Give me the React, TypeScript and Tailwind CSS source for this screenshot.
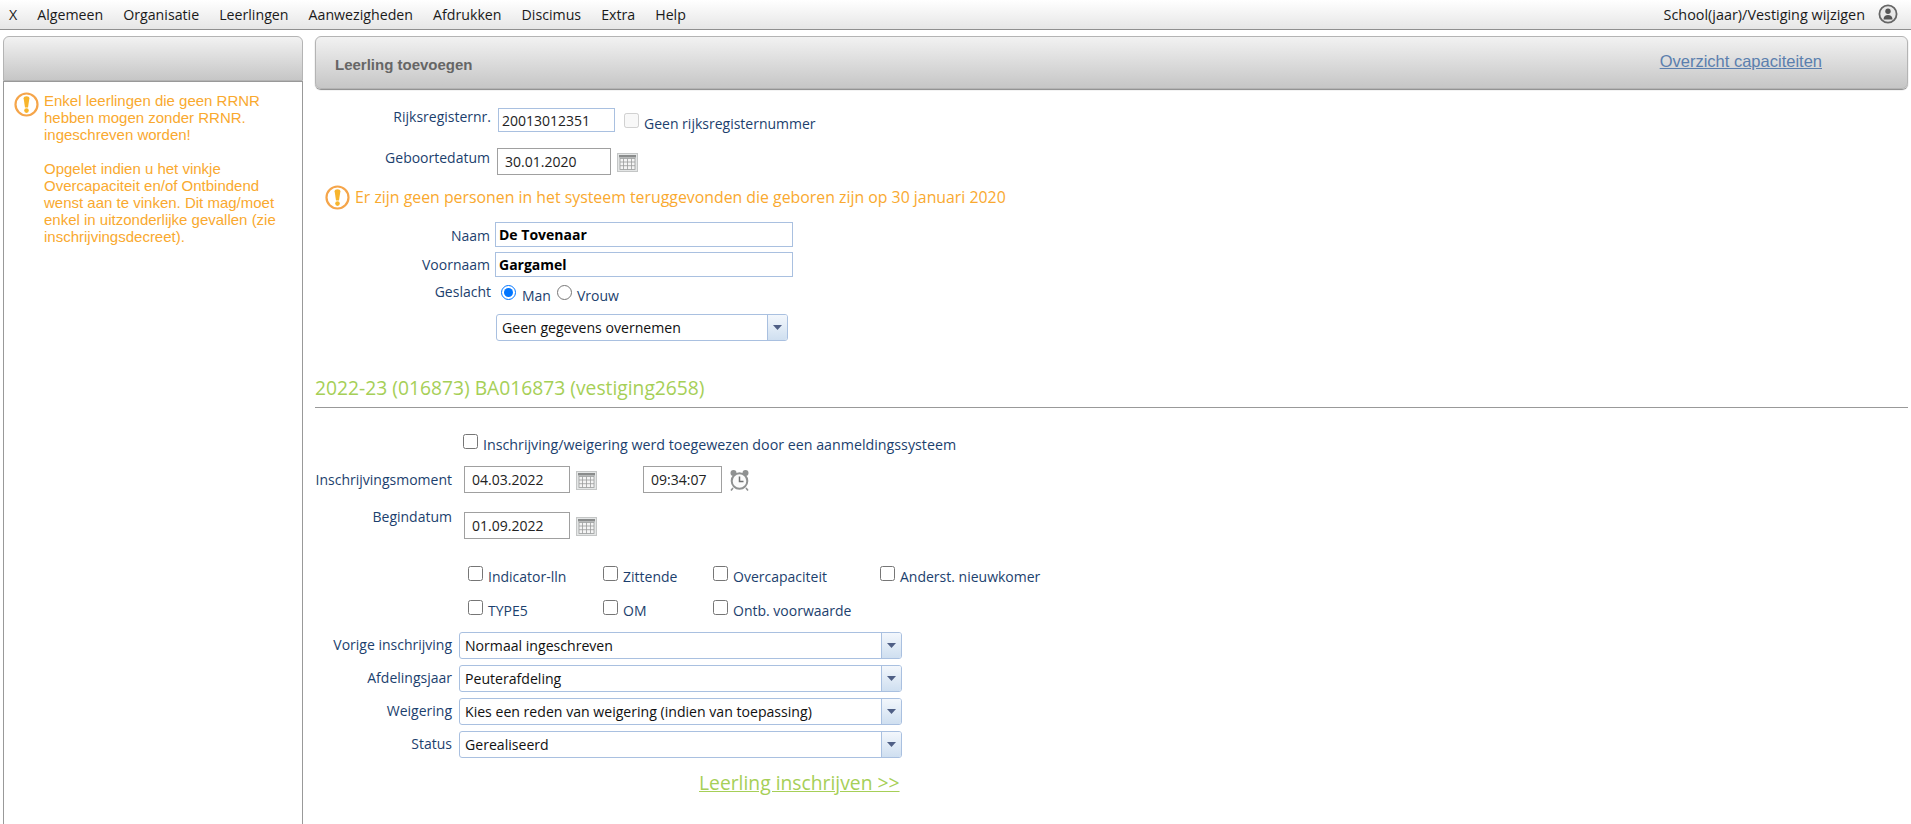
const menu = ["X", "Algemeen", "Organisatie", "Leerlingen", "Aanwezigheden", "Afdrukken", "Discimus", "Extra", "Help"];

function WarnIcon() {
  return (
    <svg viewBox="0 0 25 25" className="w-[25px] h-[25px] shrink-0">
      <circle cx="12.5" cy="12.5" r="11" fill="#fff" stroke="#f5a54a" strokeWidth="2.2" />
      <path d="M9.6 6.2c0-1.3 1.2-2 2.9-2s2.9.7 2.9 2l-1.4 9.2h-3z" fill="#f7b52c" />
      <circle cx="12.5" cy="18.6" r="2.3" fill="#f7b52c" />
    </svg>
  );
}

function CalIcon() {
  return (
    <svg viewBox="0 0 21 19" className="w-[21px] h-[19px] shrink-0">
      <rect x="0.5" y="0.5" width="20" height="18" fill="#e4e6e6" stroke="#c4c6c6" />
      <rect x="2" y="2" width="17" height="2.5" fill="#8a8c8c" />
      <rect x="3" y="5.5" width="15" height="11" fill="#f4f4f4" stroke="#9a9c9c" strokeWidth="0.8" />
      <path d="M6.5 5.5v11M10.5 5.5v11M14.5 5.5v11M3 9h15M3 12.7h15" stroke="#9a9c9c" strokeWidth="0.8" />
    </svg>
  );
}

function ClockIcon() {
  return (
    <svg viewBox="0 0 21 22" className="w-[21px] h-[22px] shrink-0">
      <circle cx="4.5" cy="4" r="3" fill="#8f9191" />
      <circle cx="16.5" cy="4" r="3" fill="#8f9191" />
      <path d="M4 19l-2 2.5M17 19l2 2.5" stroke="#8f9191" strokeWidth="1.6" />
      <circle cx="10.5" cy="12" r="7.8" fill="#fbfbfb" stroke="#8f9191" strokeWidth="2" />
      <path d="M10.5 7.5V12.5H14.5" fill="none" stroke="#6f7171" strokeWidth="1.5" />
    </svg>
  );
}

function UserIcon() {
  return (
    <svg viewBox="0 0 20 20" className="w-[20px] h-[20px]">
      <circle cx="10" cy="10" r="8.6" fill="#e8e8e8" stroke="#666" strokeWidth="1.8" />
      <circle cx="10" cy="7.2" r="2.7" fill="#555" />
      <path d="M5.5 15.5c0-3.2 2-4.6 4.5-4.6s4.5 1.4 4.5 4.6z" fill="#555" />
    </svg>
  );
}

function TextBox({ value, className }: { value: string; className: string }) {
  return (
    <input
      readOnly
      value={value}
      className={`border text-[14px] text-[#222] outline-none shrink-0 ${className}`}
    />
  );
}

function FakeSelect({ value, className }: { value: string; className: string }) {
  return (
    <div className={`flex border border-[#a9c0e0] rounded-[3px] bg-white shrink-0 overflow-hidden ${className}`}>
      <div className="flex-1 flex items-center text-[14.1px] text-[#111] pl-[5px] pt-[1px]">{value}</div>
      <div className="w-[20px] border-l border-[#a9c0e0] bg-gradient-to-b from-[#f3f7fc] to-[#cfdff0] flex items-center justify-center">
        <svg viewBox="0 0 9 5" className="w-[9px] h-[5px]">
          <path d="M0 0h9L4.5 5z" fill="#4f5f85" />
        </svg>
      </div>
    </div>
  );
}

function Check({ label, className, disabled, textClass = "text-[14px]" }: { label: string; className: string; disabled?: boolean; textClass?: string }) {
  return (
    <label className={`flex items-start ${className}`}>
      <input type="checkbox" disabled={disabled} className="w-[15px] h-[15px] m-0 shrink-0" />
      <span className={`ml-[5px] mt-[2px] leading-[18px] text-[#1c3f6e] whitespace-nowrap ${textClass}`}>{label}</span>
    </label>
  );
}

function EnrolSelect({ label, value }: { label: string; value: string }) {
  return (
    <div className="flex h-[27px] mb-[6px]">
      <div className="w-[137px] text-right text-[14px] leading-[18px] text-[#1c3f6e] mt-[4px]">{label}</div>
      <FakeSelect value={value} className="ml-[7px] w-[443px] h-[27px]" />
    </div>
  );
}

export default function App() {
  return (
    <div className="h-screen flex flex-col overflow-hidden bg-white font-['Open_Sans',sans-serif]">
      <header className="h-[30px] shrink-0 flex items-center justify-between border-b border-[#8f8f8f] bg-gradient-to-b from-white to-[#e6e6e6] pl-[9px] pr-[13px]">
        <nav className="flex gap-[20px] text-[14.2px] text-[#1a1a1a]">
          {menu.map((m) => (
            <span key={m}>{m}</span>
          ))}
        </nav>
        <div className="flex items-center gap-[13px] text-[14.4px] text-[#1a1a1a]">
          <span>School(jaar)/Vestiging wijzigen</span>
          <UserIcon />
        </div>
      </header>

      <div className="flex-1 flex min-h-0 pt-[6px] pl-[3px] pr-[3px]">
        <aside className="w-[300px] shrink-0 flex flex-col font-['Liberation_Sans',sans-serif]">
          <div className="h-[45px] shrink-0 rounded-t-[6px] border border-[#b4b4b4] bg-gradient-to-b from-[#f2f2f2] to-[#c6c6c6]" />
          <div className="flex-1 flex gap-[5px] border-x border-t border-[#999] pl-[10px] pr-[8px] pt-[10px] text-[15px] leading-[17px] text-[#f9a92f]">
            <WarnIcon />
            <div>
              <p>Enkel leerlingen die geen RRNR hebben mogen zonder RRNR. ingeschreven worden!</p>
              <p className="mt-[17px]">
                Opgelet indien u het vinkje Overcapaciteit en/of Ontbindend wenst aan te vinken. Dit mag/moet enkel in uitzonderlijke gevallen (zie inschrijvingsdecreet).
              </p>
            </div>
          </div>
        </aside>

        <main className="flex-1 min-w-0 ml-[12px]">
          <div className="h-[53px] rounded-[6px] border border-[#b4b4b4] shadow-[0_1px_1px_#888] bg-gradient-to-b from-[#f2f2f2] to-[#c6c6c6] flex items-center justify-between pl-[19px] pr-[85px]">
            <span className="font-['Liberation_Sans',sans-serif] font-bold text-[15px] text-[#666] mt-[5px]">Leerling toevoegen</span>
            <a className="font-['Liberation_Sans',sans-serif] text-[16.5px] text-[#5b7fae] underline mt-[-3px]">Overzicht capaciteiten</a>
          </div>

          <div className="flex h-[24px] mt-[19px]">
            <div className="w-[176px] text-right text-[14px] leading-[18px] text-[#1c3f6e]">Rijksregisternr.</div>
            <TextBox value="20013012351" className="ml-[7px] w-[117px] h-[24px] border-[#a9c0e0] pl-[3px]" />
            <Check label="Geen rijksregisternummer" disabled className="ml-[9px] mt-[5px]" />
          </div>

          <div className="flex h-[27px] mt-[16px]">
            <div className="w-[175px] text-right text-[14px] leading-[18px] text-[#1c3f6e] mt-[1px]">Geboortedatum</div>
            <TextBox value="30.01.2020" className="ml-[7px] w-[114px] h-[27px] border-[#a0a0a0] pl-[7px]" />
            <div className="ml-[6px] mt-[5px]"><CalIcon /></div>
          </div>

          <div className="flex items-center h-[25px] mt-[10px] ml-[10px]">
            <WarnIcon />
            <span className="ml-[5px] text-[15.85px] text-[#f9a92f]">Er zijn geen personen in het systeem teruggevonden die geboren zijn op 30 januari 2020</span>
          </div>

          <div className="flex h-[25px] mt-[12px]">
            <div className="w-[175px] text-right text-[14px] leading-[25px] text-[#1c3f6e] mt-[1px]">Naam</div>
            <TextBox value="De Tovenaar" className="ml-[5px] w-[298px] h-[25px] border-[#a9c0e0] pl-[3px] font-bold !text-black" />
          </div>
          <div className="flex h-[25px] mt-[5px]">
            <div className="w-[175px] text-right text-[14px] leading-[25px] text-[#1c3f6e]">Voornaam</div>
            <TextBox value="Gargamel" className="ml-[5px] w-[298px] h-[25px] border-[#a9c0e0] pl-[3px] font-bold !text-black" />
          </div>

          <div className="flex h-[22px] mt-[6px] text-[14px] text-[#1c3f6e]">
            <div className="w-[176px] text-right leading-[18px]">Geslacht</div>
            <input type="radio" name="geslacht" defaultChecked className="ml-[10px] mt-[2px] w-[15px] h-[15px] shrink-0" />
            <span className="ml-[6px] mt-[4px] leading-[18px]">Man</span>
            <input type="radio" name="geslacht" className="ml-[6px] mt-[2px] w-[15px] h-[15px] shrink-0" />
            <span className="ml-[5px] mt-[4px] leading-[18px]">Vrouw</span>
          </div>

          <FakeSelect value="Geen gegevens overnemen" className="ml-[181px] mt-[9px] w-[292px] h-[27px]" />

          <h2 className="mt-[30px] text-[19.25px] leading-[34px] text-[#a6cf57]">2022-23 (016873) BA016873 (vestiging2658)</h2>
          <hr className="mt-[2px] border-t border-[#999]" />

          <Check label="Inschrijving/weigering werd toegewezen door een aanmeldingssysteem" textClass="text-[14.25px]" className="ml-[148px] mt-[26px]" />

          <div className="flex h-[27px] mt-[12px]">
            <div className="w-[137px] text-right text-[14px] leading-[27px] text-[#1c3f6e]">Inschrijvingsmoment</div>
            <TextBox value="04.03.2022" className="ml-[12px] w-[106px] h-[27px] border-[#a0a0a0] pl-[7px]" />
            <div className="ml-[6px] mt-[5px]"><CalIcon /></div>
            <TextBox value="09:34:07" className="ml-[46px] w-[79px] h-[27px] border-[#a0a0a0] pl-[7px]" />
            <div className="ml-[7px] mt-[3px]"><ClockIcon /></div>
          </div>

          <div className="flex h-[27px] mt-[19px]">
            <div className="w-[137px] text-right text-[14px] leading-[18px] text-[#1c3f6e] mt-[-4px]">Begindatum</div>
            <TextBox value="01.09.2022" className="ml-[12px] w-[106px] h-[27px] border-[#a0a0a0] pl-[7px]" />
            <div className="ml-[6px] mt-[5px]"><CalIcon /></div>
          </div>

          <div className="grid grid-cols-[135px_110px_167px_auto] ml-[153px] mt-[27px] w-max">
            <Check label="Indicator-lln" className="h-[34px]" />
            <Check label="Zittende" className="h-[34px]" />
            <Check label="Overcapaciteit" className="h-[34px]" />
            <Check label="Anderst. nieuwkomer" className="h-[34px]" />
            <Check label="TYPE5" className="h-[32px]" />
            <Check label="OM" className="h-[32px]" />
            <Check label="Ontb. voorwaarde" className="h-[32px]" />
          </div>

          <EnrolSelect label="Vorige inschrijving" value="Normaal ingeschreven" />
          <EnrolSelect label="Afdelingsjaar" value="Peuterafdeling" />
          <EnrolSelect label="Weigering" value="Kies een reden van weigering (indien van toepassing)" />
          <EnrolSelect label="Status" value="Gerealiseerd" />

          <a className="block mt-[11px] ml-[384px] text-[19.3px] text-[#a6cf57] underline">Leerling inschrijven &gt;&gt;</a>
        </main>
      </div>
    </div>
  );
}
